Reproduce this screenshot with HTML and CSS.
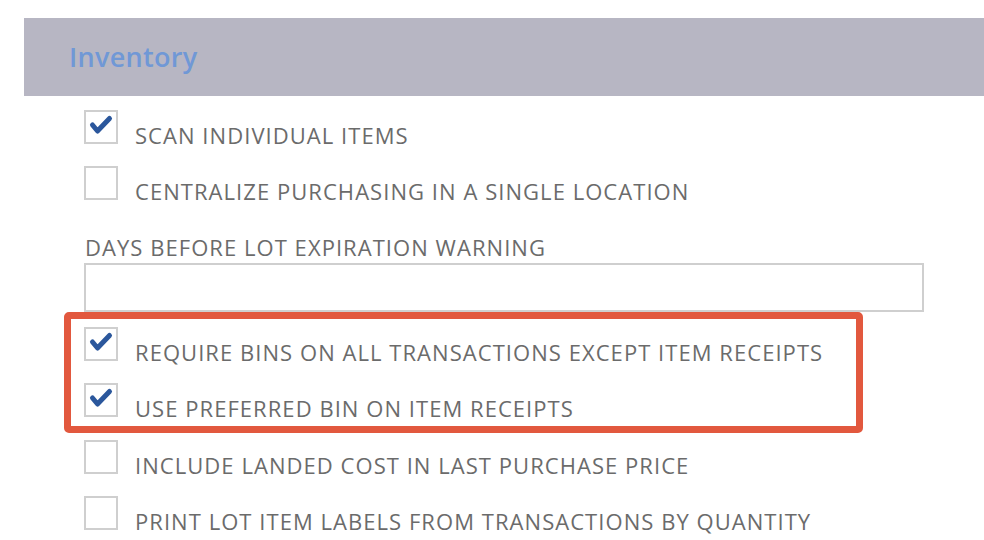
FILE: index.html
```html
<!DOCTYPE html>
<html>
<head>
<meta charset="utf-8">
<link rel="stylesheet" href="styles.css">
</head>
<body>
<div class="page">
  <div class="section-header"><h2 class="section-title">Inventory</h2></div>
  <div class="section-body">
    <div class="row">
      <span class="box checked"><svg viewBox="0 0 34 34" class="tick"><path d="M8.5 15 L13.5 21 L25.5 8.5"/></svg></span>
      <span class="label">SCAN INDIVIDUAL ITEMS</span>
    </div>
    <div class="row">
      <span class="box"></span>
      <span class="label">CENTRALIZE PURCHASING IN A SINGLE LOCATION</span>
    </div>
    <div class="field">
      <div class="field-label">DAYS BEFORE LOT EXPIRATION WARNING</div>
      <div class="input"></div>
    </div>
    <div class="highlight">
      <div class="row">
        <span class="box checked"><svg viewBox="0 0 34 34" class="tick"><path d="M8.5 15 L13.5 21 L25.5 8.5"/></svg></span>
        <span class="label">REQUIRE BINS ON ALL TRANSACTIONS EXCEPT ITEM RECEIPTS</span>
      </div>
      <div class="row">
        <span class="box checked"><svg viewBox="0 0 34 34" class="tick"><path d="M8.5 15 L13.5 21 L25.5 8.5"/></svg></span>
        <span class="label">USE PREFERRED BIN ON ITEM RECEIPTS</span>
      </div>
    </div>
    <div class="row">
      <span class="box"></span>
      <span class="label">INCLUDE LANDED COST IN LAST PURCHASE PRICE</span>
    </div>
    <div class="row">
      <span class="box"></span>
      <span class="label">PRINT LOT ITEM LABELS FROM TRANSACTIONS BY QUANTITY</span>
    </div>
  </div>
</div>
</body>
</html>
```
FILE: styles.css
```css
html, body {
  margin: 0;
  padding: 0;
  background: #ffffff;
  overflow: hidden;
}
.page {
  padding-top: 18px;
  padding-left: 24px;
  font-family: "Open Sans", "Noto Sans", sans-serif;
}
.section-header {
  height: 78px;
  background: #b7b6c3;
  display: flex;
  align-items: flex-start;
  padding-left: 45px;
}
.section-title {
  margin: 0;
  margin-top: 20px;
  font-size: 27px;
  line-height: 37px;
  font-weight: 600;
  letter-spacing: 0.3px;
  color: #7098d6;
}
.section-body {
  padding-left: 60px;
  padding-top: 14px;
}
.row {
  display: flex;
  align-items: flex-start;
  height: 34px;
  margin-bottom: 22px;
}
.box {
  box-sizing: border-box;
  width: 34px;
  height: 34px;
  border: 2px solid #cfcfcf;
  background: #fff;
  flex: none;
  position: relative;
}
.tick {
  position: absolute;
  left: -2px;
  top: -2px;
  width: 34px;
  height: 34px;
}
.tick path {
  fill: none;
  stroke: #2b579c;
  stroke-width: 5;
  stroke-linecap: round;
  stroke-linejoin: round;
}
.label {
  margin-left: 17px;
  margin-top: 8px;
  font-size: 22px;
  line-height: 34px;
  letter-spacing: 1.05px;
  color: #6b6b6b;
  white-space: nowrap;
}
.field {
  margin-top: 32px;
}
.field-label {
  font-size: 22px;
  line-height: 30px;
  letter-spacing: 1.05px;
  color: #6b6b6b;
  padding-left: 1px;
}
.input {
  box-sizing: border-box;
  width: 840px;
  height: 49px;
  border: 2px solid #cfcfcf;
  margin-top: 1px;
}
.highlight {
  box-sizing: border-box;
  width: 799px;
  height: 121px;
  margin-left: -20px;
  border: 7px solid #e2583e;
  border-radius: 5px;
  padding-left: 13px;
  padding-top: 8px;
  margin-bottom: 7px;
}
.highlight .row {
  margin-bottom: 22px;
}
```
